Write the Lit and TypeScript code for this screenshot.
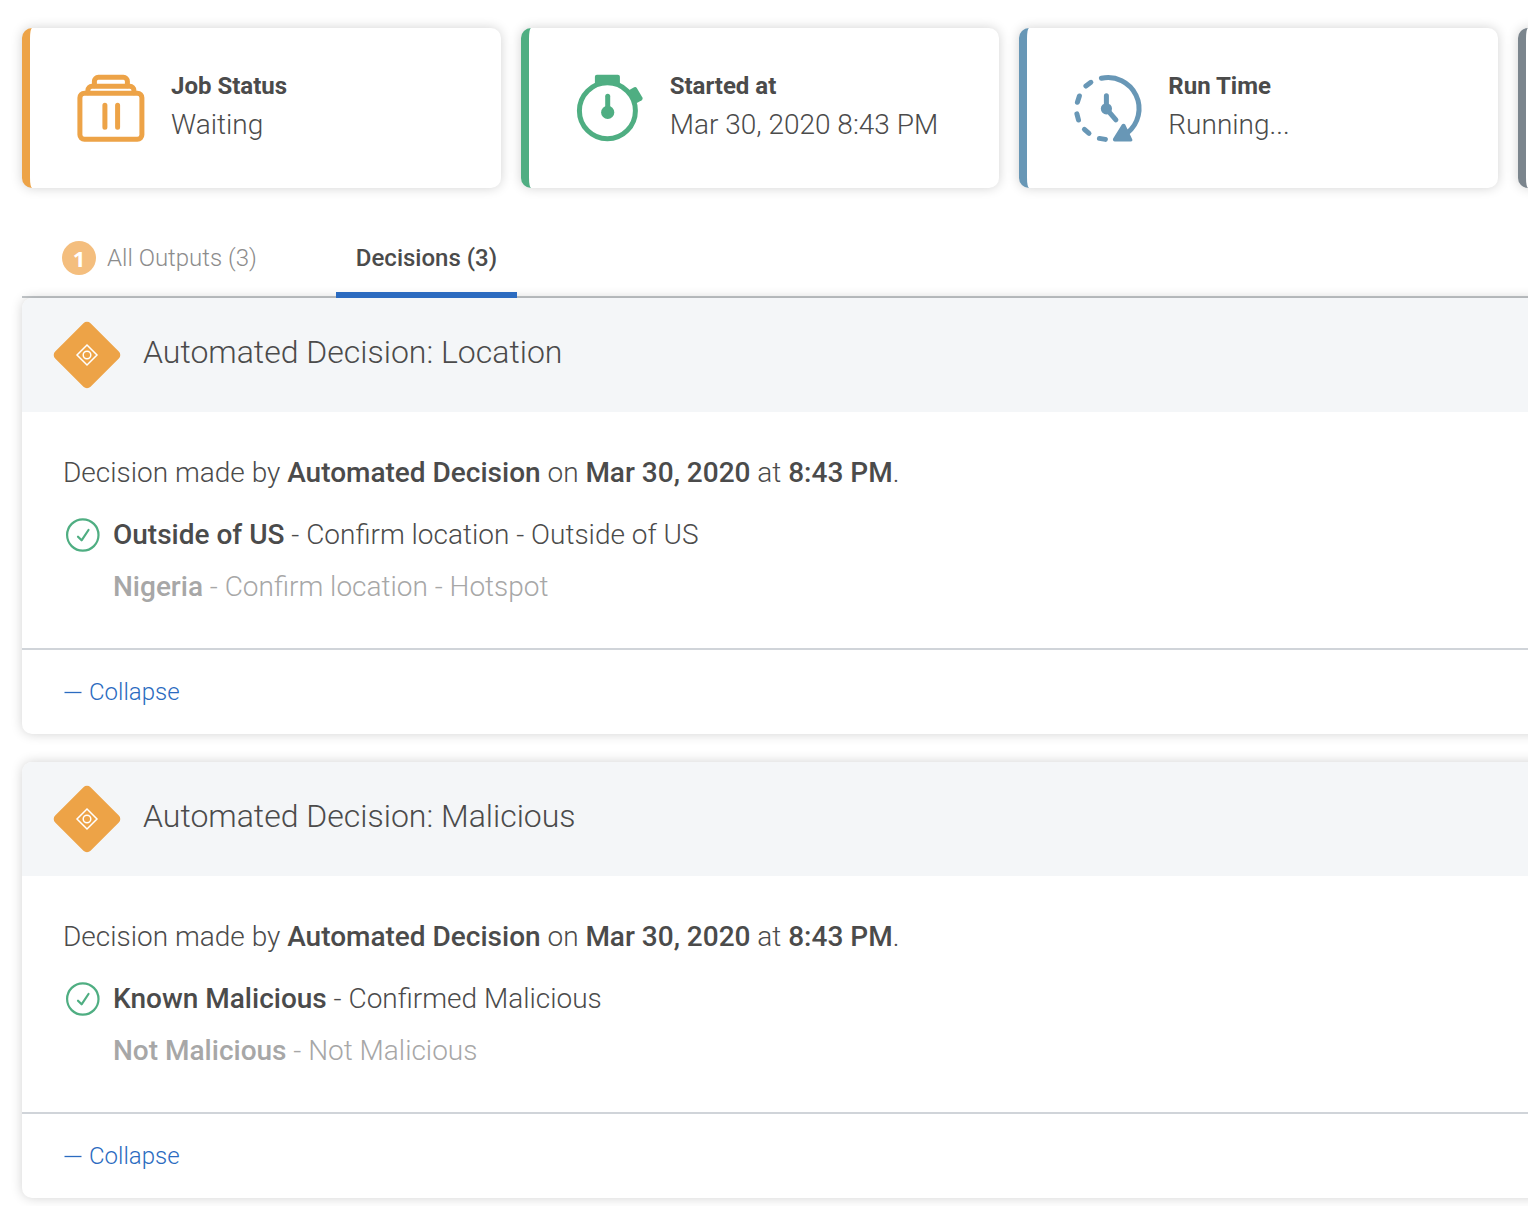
import { LitElement, html, css, svg } from "lit";
import { customElement, property, state } from "lit/decorators.js";

const icons = {
  waiting: svg`
    <rect x="2.500" y="18.500" width="62" height="46" rx="4.500" />
    <path d="M10.500 18v-2.500a4 4 0 0 1 4-4h38a4 4 0 0 1 4 4V18" />
    <path d="M17 11V6.500a4 4 0 0 1 4-4h25a4 4 0 0 1 4 4V11" />
    <path d="M27.500 30.500v22M40.200 30.500v22" />`,
  started: svg`
    <circle cx="31" cy="36" r="28" />
    <path class="solid" d="M20.500 0h21a2 2 0 0 1 2 2v8h-25V2a2 2 0 0 1 2-2z" />
    <path class="solid" d="M52.500 15.500l5.200-3a2 2 0 0 1 2.700.7l5.600 9.600a2 2 0 0 1-.7 2.700l-5.300 3z" />
    <circle class="solid" cx="31.300" cy="37.600" r="6.600" />
    <path d="M31.300 37V21.500" />`,
  running: svg`
    <path d="M27 3.500A31 31 0 0 1 53 58" />
    <path class="solid" d="M47.500 49.700a2 2 0 0 1 3.300 0l7 14.700a1.500 1.500 0 0 1-1.300 2.300H40.500a2 2 0 0 1-1.600-3.200z" />
    <path d="M16.500 7.500l-5 3.800M5 21.200L3 27.500M2.500 39l1.600 6.200M10 54.500l4.600 4M25 63.600l6 1" />
    <circle class="solid" cx="32" cy="34" r="5.600" />
    <path d="M32 34V21M32 34l9.500 11" />`,
};

type IconName = keyof typeof icons;

interface Stat {
  label: string;
  value: string;
  tone: string;
  icon?: IconName;
}

interface Option {
  name: string;
  detail: string;
  chosen: boolean;
}

interface Decision {
  title: string;
  options: Option[];
}

const stats: Stat[] = [
  { label: "Job Status", value: "Waiting", tone: "orange", icon: "waiting" },
  { label: "Started at", value: "Mar 30, 2020 8:43 PM", tone: "green", icon: "started" },
  { label: "Run Time", value: "Running...", tone: "blue", icon: "running" },
  { label: "", value: "", tone: "gray" },
];

const decisions: Decision[] = [
  {
    title: "Automated Decision: Location",
    options: [
      { name: "Outside of US", detail: "Confirm location - Outside of US", chosen: true },
      { name: "Nigeria", detail: "Confirm location - Hotspot", chosen: false },
    ],
  },
  {
    title: "Automated Decision: Malicious",
    options: [
      { name: "Known Malicious", detail: "Confirmed Malicious", chosen: true },
      { name: "Not Malicious", detail: "Not Malicious", chosen: false },
    ],
  },
];

@customElement("stat-card")
class StatCard extends LitElement {
  @property({ attribute: false }) stat!: Stat;

  static styles = css`
    :host {
      display: block;
    }
    .card {
      box-sizing: border-box;
      display: flex;
      align-items: center;
      gap: 26px;
      height: 160px;
      padding: 0 47px;
      border-left: 8px solid var(--tone);
      border-radius: 10px;
      background: #fff;
      box-shadow: 0 0 12px rgba(0, 0, 0, 0.18);
    }
    .orange {
      --tone: #eda347;
    }
    .green {
      --tone: #4fae82;
    }
    .blue {
      --tone: #6897b6;
    }
    .gray {
      --tone: #7b858d;
    }
    .icon {
      flex: none;
      width: 68px;
      height: 68px;
      overflow: visible;
      fill: none;
      stroke: var(--tone);
      stroke-width: 5;
      stroke-linecap: round;
      stroke-linejoin: round;
    }
    .icon .solid {
      fill: var(--tone);
      stroke: none;
    }
    .text {
      margin: 0;
      padding-bottom: 2px;
      white-space: nowrap;
    }
    .label {
      font-size: 24px;
      line-height: 36px;
      font-weight: 700;
    }
    .value {
      margin: 0;
      font-size: 28px;
      line-height: 42px;
      font-weight: 300;
    }
  `;

  render() {
    const { label, value, tone, icon } = this.stat;
    return html`<div class="card ${tone}">
      ${icon
        ? html`<svg class="icon" viewBox="-0.4 -0.8 68 68" aria-hidden="true">${icons[icon]}</svg>
            <dl class="text">
              <dt class="label">${label}</dt>
              <dd class="value">${value}</dd>
            </dl>`
        : null}
    </div>`;
  }
}

@customElement("decision-card")
class DecisionCard extends LitElement {
  @property({ attribute: false }) decision!: Decision;
  @state() private open = true;

  static styles = css`
    :host {
      display: block;
    }
    .card {
      border-radius: 10px;
      background: #fff;
      box-shadow: 0 0 12px rgba(0, 0, 0, 0.18);
    }
    .head {
      display: flex;
      align-items: center;
      gap: 22px;
      height: 114px;
      padding-left: 31px;
      border-radius: 10px 10px 0 0;
      background: #f4f6f8;
    }
    .diamond {
      flex: none;
      width: 68px;
      height: 68px;
    }
    .title {
      margin: 0;
      padding-bottom: 6px;
      font-size: 32px;
      line-height: 40px;
      font-weight: 300;
    }
    .body {
      padding: 41px 41px 35px;
      font-size: 28px;
      font-weight: 300;
    }
    .made {
      margin: 0 0 16px;
      line-height: 40px;
    }
    strong {
      font-weight: 500;
    }
    .options {
      margin: 0;
      padding: 0;
      list-style: none;
    }
    .option {
      display: grid;
      grid-template-columns: 50px 1fr;
      align-items: center;
      line-height: 52px;
    }
    .text {
      grid-column: 2;
    }
    .rejected {
      color: #a7a7a7;
    }
    .check {
      width: 34px;
      height: 34px;
      margin-left: 3px;
      fill: none;
      stroke: #4fae82;
      stroke-linecap: round;
      stroke-linejoin: round;
    }
    .foot {
      padding: 24px 42px;
      border-top: 2px solid #d0d4d9;
    }
    .toggle {
      display: flex;
      align-items: center;
      gap: 7px;
      padding: 0;
      border: 0;
      background: none;
      color: #2b6bc0;
      font: inherit;
      font-size: 24px;
      line-height: 36px;
      font-weight: 300;
      cursor: pointer;
    }
    .sign {
      width: 18px;
      height: 18px;
      stroke: currentColor;
    }
  `;

  render() {
    const { title, options } = this.decision;
    return html`<article class="card">
      <header class="head">
        <svg class="diamond" viewBox="0 0 68 68" aria-hidden="true">
          <rect x="9" y="9" width="50" height="50" rx="5" fill="#eda347" transform="rotate(45 34 34)" />
          <g fill="none" stroke="#fff" stroke-width="1.500">
            <path d="M34 24L44 34 34 44 24 34z" />
            <circle cx="34" cy="34" r="3.800" />
          </g>
        </svg>
        <h2 class="title">${title}</h2>
      </header>
      ${this.open
        ? html`<div class="body">
            <p class="made">
              Decision made by <strong>Automated Decision</strong> on <strong>Mar 30, 2020</strong> at
              <strong>8:43 PM</strong>.
            </p>
            <ul class="options">
              ${options.map(
                (o) => html`<li class="option ${o.chosen ? "" : "rejected"}">
                  ${o.chosen
                    ? html`<svg class="check" viewBox="0 0 34 34" stroke-width="2.200" aria-hidden="true">
                        <circle cx="16.800" cy="17" r="15.700" />
                        <path d="M12 18.700l3.600 3.600L22.500 12" />
                      </svg>`
                    : null}
                  <span class="text"><strong>${o.name}</strong> - ${o.detail}</span>
                </li>`
              )}
            </ul>
          </div>`
        : null}
      <footer class="foot">
        <button class="toggle" type="button" aria-expanded=${this.open} @click=${() => (this.open = !this.open)}>
          <svg class="sign" viewBox="0 0 18 18" stroke-width="1.300" aria-hidden="true">
            <path d="M0.500 9.500h17" />
            ${this.open ? null : svg`<path d="M9 1v17" />`}
          </svg>
          ${this.open ? "Collapse" : "Expand"}
        </button>
      </footer>
    </article>`;
  }
}

@customElement("app-root")
class AppRoot extends LitElement {
  static styles = css`
    :host {
      display: block;
      overflow: hidden;
      padding: 28px 0 8px 22px;
      background: #fff;
      color: #4b4b4b;
      font-family: Roboto, "Liberation Sans", sans-serif;
    }
    .stats {
      display: grid;
      grid-template-columns: repeat(4, calc((100% - 70px) / 3));
      gap: 20px;
    }
    .tabs {
      display: flex;
      height: 72px;
      margin-top: 36px;
      border-bottom: 2px solid #c3c7ca;
    }
    .tab {
      display: flex;
      align-items: center;
      gap: 11px;
      box-sizing: border-box;
      height: 74px;
      padding: 0 20px;
      border: 0;
      border-bottom: 6px solid transparent;
      background: none;
      color: #8c8c8c;
      font: inherit;
      font-size: 24px;
      font-weight: 300;
      cursor: pointer;
    }
    .first {
      margin: 0 59px 0 20px;
    }
    .active {
      z-index: 1;
      border-bottom-color: #2b6bc0;
      color: #4b4b4b;
      font-weight: 500;
    }
    .badge {
      width: 34px;
      border-radius: 50%;
      background: #f4be7e;
      color: #fff;
      font-family: "Noto Sans", sans-serif;
      font-size: 22px;
      font-weight: 700;
      line-height: 34px;
      text-align: center;
    }
    .list {
      display: grid;
      gap: 28px;
      margin-right: -24px;
    }
  `;

  render() {
    return html`
      <section class="stats">${stats.map((s) => html`<stat-card .stat=${s}></stat-card>`)}</section>
      <nav class="tabs" role="tablist">
        <button class="tab first" type="button" role="tab" aria-selected="false">
          <span class="badge">1</span>All Outputs (3)
        </button>
        <button class="tab active" type="button" role="tab" aria-selected="true">Decisions (3)</button>
      </nav>
      <main class="list">${decisions.map((d) => html`<decision-card .decision=${d}></decision-card>`)}</main>
    `;
  }
}
